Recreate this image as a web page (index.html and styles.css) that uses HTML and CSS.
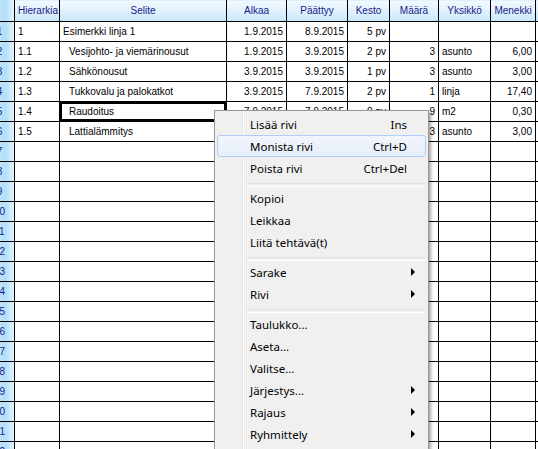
FILE: index.html
```html
<!DOCTYPE html>
<html>
<head>
<meta charset="utf-8">
<link rel="stylesheet" href="styles.css">
</head>
<body>
<div class="view">
  <table class="grid">
    <colgroup>
      <col class="c-rh"><col class="c-hier"><col class="c-sel"><col class="c-alk"><col class="c-paa"><col class="c-kes"><col class="c-maa"><col class="c-yks"><col class="c-men"><col class="c-ext">
    </colgroup>
    <thead>
      <tr><th class="corner"></th><th>Hierarkia</th><th>Selite</th><th>Alkaa</th><th>Päättyy</th><th>Kesto</th><th>Määrä</th><th>Yksikkö</th><th>Menekki</th><th></th></tr>
    </thead>
    <tbody>
      <tr><td class="rh">1</td><td>1</td><td>Esimerkki linja 1</td><td class="r">1.9.2015</td><td class="r">8.9.2015</td><td class="r">5 pv</td><td></td><td></td><td></td><td></td></tr>
      <tr><td class="rh">2</td><td>1.1</td><td class="in">Vesijohto- ja viemärinousut</td><td class="r">1.9.2015</td><td class="r">3.9.2015</td><td class="r">2 pv</td><td class="r">3</td><td>asunto</td><td class="r">6,00</td><td></td></tr>
      <tr><td class="rh">3</td><td>1.2</td><td class="in">Sähkönousut</td><td class="r">3.9.2015</td><td class="r">3.9.2015</td><td class="r">1 pv</td><td class="r">3</td><td>asunto</td><td class="r">3,00</td><td></td></tr>
      <tr><td class="rh">4</td><td>1.3</td><td class="in">Tukkovalu ja palokatkot</td><td class="r">3.9.2015</td><td class="r">7.9.2015</td><td class="r">2 pv</td><td class="r">1</td><td>linja</td><td class="r">17,40</td><td></td></tr>
      <tr><td class="rh">5</td><td>1.4</td><td class="in sel">Raudoitus</td><td class="r">7.9.2015</td><td class="r">7.9.2015</td><td class="r">0 pv</td><td class="r">9</td><td>m2</td><td class="r">0,30</td><td></td></tr>
      <tr><td class="rh">6</td><td>1.5</td><td class="in">Lattialämmitys</td><td class="r">7.9.2015</td><td class="r">8.9.2015</td><td class="r">1 pv</td><td class="r">3</td><td>asunto</td><td class="r">3,00</td><td></td></tr>
      <tr><td class="rh">7</td><td></td><td></td><td></td><td></td><td></td><td></td><td></td><td></td><td></td></tr>
      <tr><td class="rh">8</td><td></td><td></td><td></td><td></td><td></td><td></td><td></td><td></td><td></td></tr>
      <tr><td class="rh">9</td><td></td><td></td><td></td><td></td><td></td><td></td><td></td><td></td><td></td></tr>
      <tr><td class="rh">10</td><td></td><td></td><td></td><td></td><td></td><td></td><td></td><td></td><td></td></tr>
      <tr><td class="rh">11</td><td></td><td></td><td></td><td></td><td></td><td></td><td></td><td></td><td></td></tr>
      <tr><td class="rh">12</td><td></td><td></td><td></td><td></td><td></td><td></td><td></td><td></td><td></td></tr>
      <tr><td class="rh">13</td><td></td><td></td><td></td><td></td><td></td><td></td><td></td><td></td><td></td></tr>
      <tr><td class="rh">14</td><td></td><td></td><td></td><td></td><td></td><td></td><td></td><td></td><td></td></tr>
      <tr><td class="rh">15</td><td></td><td></td><td></td><td></td><td></td><td></td><td></td><td></td><td></td></tr>
      <tr><td class="rh">16</td><td></td><td></td><td></td><td></td><td></td><td></td><td></td><td></td><td></td></tr>
      <tr><td class="rh">17</td><td></td><td></td><td></td><td></td><td></td><td></td><td></td><td></td><td></td></tr>
      <tr><td class="rh">18</td><td></td><td></td><td></td><td></td><td></td><td></td><td></td><td></td><td></td></tr>
      <tr><td class="rh">19</td><td></td><td></td><td></td><td></td><td></td><td></td><td></td><td></td><td></td></tr>
      <tr><td class="rh">20</td><td></td><td></td><td></td><td></td><td></td><td></td><td></td><td></td><td></td></tr>
      <tr><td class="rh">21</td><td></td><td></td><td></td><td></td><td></td><td></td><td></td><td></td><td></td></tr>
      <tr><td class="rh">22</td><td></td><td></td><td></td><td></td><td></td><td></td><td></td><td></td><td></td></tr>
    </tbody>
  </table>

  <div class="menu">
    <div class="item"><span class="label">Lisää rivi</span><span class="key">Ins</span></div>
    <div class="item hot"><span class="label">Monista rivi</span><span class="key">Ctrl+D</span></div>
    <div class="item"><span class="label">Poista rivi</span><span class="key">Ctrl+Del</span></div>
    <div class="sep"></div>
    <div class="item"><span class="label">Kopioi</span></div>
    <div class="item"><span class="label">Leikkaa</span></div>
    <div class="item"><span class="label">Liitä tehtävä(t)</span></div>
    <div class="sep"></div>
    <div class="item sub"><span class="label">Sarake</span><span class="arrow"></span></div>
    <div class="item sub"><span class="label">Rivi</span><span class="arrow"></span></div>
    <div class="sep"></div>
    <div class="item"><span class="label">Taulukko...</span></div>
    <div class="item"><span class="label">Aseta...</span></div>
    <div class="item"><span class="label">Valitse...</span></div>
    <div class="item sub"><span class="label">Järjestys...</span><span class="arrow"></span></div>
    <div class="item sub"><span class="label">Rajaus</span><span class="arrow"></span></div>
    <div class="item sub"><span class="label">Ryhmittely</span><span class="arrow"></span></div>
    <div class="item"><span class="label">Tulosta...</span></div>
  </div>
</div>
</body>
</html>
```
FILE: styles.css
```css
html, body {
  margin: 0;
  padding: 0;
  background: #ffffff;
  overflow: hidden;
  width: 538px;
  height: 449px;
}

.view {
  position: relative;
  width: 538px;
  height: 449px;
  overflow: hidden;
}

.grid {
  border-collapse: collapse;
  table-layout: fixed;
  margin-left: -16px;
  margin-top: -1px;
  width: 614px;
  font-family: "Liberation Sans", Arial, sans-serif;
  font-size: 10px;
  color: #000;
}

.c-rh { width: 30px; }
.c-hier { width: 45px; }
.c-sel { width: 167px; }
.c-alk { width: 60px; }
.c-paa { width: 61px; }
.c-kes { width: 42px; }
.c-maa { width: 49px; }
.c-yks { width: 52px; }
.c-men { width: 45px; }
.c-ext { width: 63px; }

.grid th,
.grid td {
  border: 1px solid #000;
  padding: 0 3px;
  white-space: nowrap;
  overflow: hidden;
}

.grid th {
  height: 21px;
  font-weight: normal;
  color: #1a1a8a;
  text-align: center;
  background: linear-gradient(to bottom, #f3f9fe 0%, #e2f2fd 45%, #c9e8fb 100%);
}

.grid td {
  height: 19px;
  text-align: left;
}

.grid td.r { text-align: right; }
.grid td.in { padding-left: 9px; }

.grid td.rh {
  text-align: center;
  color: #1a1a8a;
  background: linear-gradient(to right, #cbeafc 0%, #b3dffa 70%, #e9f6fe 100%);
  padding: 0;
}

.grid th.corner {
  background: linear-gradient(to right, #cbeafc 0%, #b3dffa 70%, #e9f6fe 100%);
}

.grid td.sel {
  box-shadow: inset 0 0 0 2px #000;
}

/* context menu */
.menu {
  position: absolute;
  left: 214px;
  top: 110px;
  width: 209px;
  padding: 2px;
  background: #f0f0f0;
  border: 1px solid #979797;
  box-shadow: 2px 2px 3px rgba(0, 0, 0, 0.35);
  font-family: "Noto Sans", "Liberation Sans", sans-serif;
  font-size: 11.5px;
  color: #000;
  background-image: linear-gradient(to right, transparent 27px, #e2e3e3 27px, #e2e3e3 28px, #ffffff 28px, #ffffff 29px, transparent 29px);
}

.item {
  position: relative;
  display: flex;
  align-items: center;
  height: 22px;
  padding: 0 18px 0 32px;
  box-sizing: border-box;
  border: 1px solid transparent;
  border-radius: 3px;
}

.item .label { flex: 1; }

.item .key {
  text-align: right;
}

.item.hot {
  border-color: #aecff7;
  background: linear-gradient(to bottom, #f2f6fb 0%, #e6eef9 100%);
}

.item .arrow {
  width: 0;
  height: 0;
  border-top: 4px solid transparent;
  border-bottom: 4px solid transparent;
  border-left: 4px solid #000;
  margin-right: -8px;
}

.sep {
  height: 8px;
  margin-left: 30px;
  margin-right: 1px;
  box-sizing: border-box;
  border-bottom: 1px solid #ffffff;
  position: relative;
}

.sep::before {
  content: "";
  display: block;
  height: 4px;
  border-bottom: 1px solid #e0e0e0;
}
```
